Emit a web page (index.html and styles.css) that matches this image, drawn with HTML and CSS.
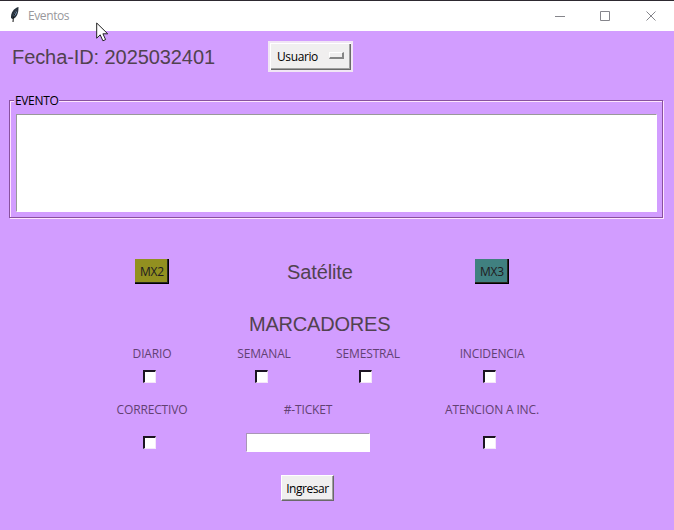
FILE: index.html
```html
<!DOCTYPE html>
<html lang="es">
<head>
<meta charset="utf-8">
<title>Eventos</title>
<link rel="stylesheet" href="styles.css">
</head>
<body>
<header class="titlebar">
  <svg class="feather" width="12" height="18" viewBox="0 0 12 18"><path d="M9.500 1C5 2 1.500 7 2 12l1.500 1c4-1 6-5 6-12z" fill="#26303a"/><path d="M8.500 3C6 5 4.500 8 4.300 11 6.500 9.500 8.200 7 8.500 3z" fill="#88a9cf"/><path d="M8.500 3.500C5.500 7 4 11 4 16" fill="none" stroke="#111" stroke-width="1"/></svg>
  <span class="title">Eventos</span>
  <svg class="controls" width="102" height="12" viewBox="0 0 102 12" fill="none" stroke="#85858b"><path d="M0 6.500h10M45.500 1.500h9v9h-9zM91.500 1.500l9 9M100.500 1.500l-9 9"/></svg>
</header>
<main>
  <div class="top">
    <h1 class="date">Fecha-ID: 2025032401</h1>
    <button class="menu"><span class="t-user">Usuario</span><i class="indicator"></i></button>
  </div>
  <fieldset class="event">
    <legend><span class="t-event">EVENTO</span></legend>
    <textarea aria-label="Evento"></textarea>
  </fieldset>
  <div class="satellite">
    <button class="mx olive">MX2</button>
    <h2>Satélite</h2>
    <button class="mx teal">MX3</button>
  </div>
  <h2 class="markers-title">MARCADORES</h2>
  <div class="markers">
    <label><span class="t-diario">DIARIO</span><input type="checkbox"></label>
    <label><span class="t-semanal">SEMANAL</span><input type="checkbox"></label>
    <label><span class="t-semestral">SEMESTRAL</span><input type="checkbox"></label>
    <label><span class="t-incidencia">INCIDENCIA</span><input type="checkbox"></label>
    <label class="second"><span class="t-correctivo">CORRECTIVO</span><input type="checkbox"></label>
    <label class="ticket"><span class="t-ticket">#-TICKET</span><input type="text"></label>
    <label class="second"><span class="t-atencion">ATENCION A INC.</span><input type="checkbox"></label>
  </div>
  <button class="submit">Ingresar</button>
</main>
<svg class="pointer" width="13" height="20" viewBox="0 0 13 20"><path d="M.7 1v15.200l3.500-3.400 2.700 6 2.700-1.200-2.700-5.800h4.800z" fill="#fff" stroke="#202020"/></svg>
</body>
</html>
```
FILE: styles.css
```css
* { box-sizing: border-box; }
body {
  margin: 0;
  width: 674px;
  height: 530px;
  overflow: hidden;
  background: #d29dff;
  color: #000;
  font: 12px/16px "Open Sans", "Noto Sans", sans-serif;
}
button, input, textarea { font: inherit; color: inherit; border-radius: 0; margin: 0; padding: 0; appearance: none; outline: none; }
span { white-space: nowrap; }
h1, h2 { margin: 0; font: 20px/24px "Liberation Sans", Arial, sans-serif; color: #51424f; white-space: nowrap; }
.titlebar {
  display: flex;
  align-items: center;
  height: 31px;
  padding: 0 17px 0 9px;
  background: #fff;
  border-top: 1px solid #2d2930;
}
.feather { margin-right: 7px; margin-top: -2px; }
.title { color: #98989c; letter-spacing: -.4px; }
.controls { margin-left: auto; margin-top: -1px; }
.top { display: flex; height: 62px; padding: 10px 0 0 12px; }
.date { width: 256px; padding-top: 4px; letter-spacing: -.08px; }
.menu {
  display: flex;
  align-items: center;
  width: 85px;
  height: 31px;
  padding: 0 6px 0 7px;
  background: #f0efef;
  border: 2px solid #f1e6f5;
  box-shadow: inset 1px 1px #fff, inset -1px -1px #696969, inset -2px -2px #a0a0a0;
}
.t-user { letter-spacing: -.4px; padding-top: 1px; }
.indicator { width: 15px; height: 7px; margin: -2px 1px 0 auto; background: #f0efef; border: solid; border-width: 1px 2px 2px 1px; border-color: #fff #858585 #858585 #fff; }
.event {
  height: 125px;
  margin: 0 11px 0 9px;
  padding: 6px 5px 4px 6px;
  min-width: 0;
  border: 1px solid #88519f;
  box-shadow: 1px 1px #ffe4ff, inset 1px 1px #ffe4ff;
}
.event legend { margin-left: -2px; padding: 0 1px; line-height: 16px; height: 15px; background: #d29dff; letter-spacing: -.35px; }
.event textarea { display: block; width: 641px; height: 98px; resize: none; border: 1px solid #fff; border-top-color: #999; border-left-color: #999; background: #fff; }
.satellite { display: flex; align-items: center; height: 26px; margin: 41px 0 0 135px; }
.satellite h2 { width: 66px; margin: 0 122px 0 118px; letter-spacing: -.12px; }
.mx { width: 34px; height: 25px; margin-top: -1px; padding: 1px 0 0 1px; color: #211b20; border: solid #000; border-width: 0 1px 1px 0; letter-spacing: -.2px; box-shadow: inset -1px -1px #292820; }
.olive { background: #929020; }
.teal { background: #408080; }
.markers-title { margin: 27px 0 0 249px; letter-spacing: -.2px; }
.markers {
  display: grid;
  grid-template-columns: 112px 112px 96px 152px;
  grid-template-rows: 56px 73px;
  margin: 10px 0 0 96px;
  color: #624173;
  letter-spacing: -.15px;
}
.markers label { display: flex; flex-direction: column; align-items: center; }
.markers input[type="checkbox"] {
  width: 13px;
  height: 13px;
  margin: 8px 5px 0 0;
  background: #fff;
  border: solid;
  border-color: #1c1422 #f5e6fa #f5e6fa #1c1422;
  border-width: 2px 1px 1px 2px;
}
.markers .second input { margin-top: 18px; }
.ticket { grid-column: span 2; padding-right: 8px; }
.ticket input { width: 124px; height: 19px; margin-top: 15px; background: #fff; border: 1px solid #fff; border-top-color: #a996b7; border-left-color: #a996b7; }
.submit { display: block; width: 53px; height: 26px; margin: 0 0 0 281px; padding-top: 1px; background: #f0efef; border: 1px solid #fff; border-right: 1px solid #696969; border-bottom: 1px solid #696969; box-shadow: inset -1px -1px #a0a0a0; letter-spacing: -.45px; }
.pointer { position: absolute; left: 96px; top: 22px; }
```
